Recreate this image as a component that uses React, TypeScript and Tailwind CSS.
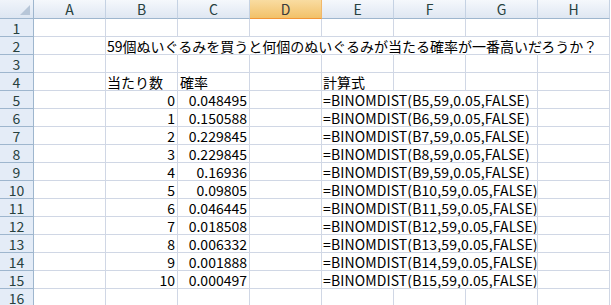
import React from "react";

const cols = ["A", "B", "C", "D", "E", "F", "G", "H"];

type Row = { b?: string; c?: string; e?: string; bLeft?: boolean; cLeft?: boolean; wide?: string };

const probs = ["0.048495", "0.150588", "0.229845", "0.229845", "0.16936", "0.09805", "0.046445", "0.018508", "0.006332", "0.001888", "0.000497"];

const rows: Row[] = [
  {},
  { wide: "59個ぬいぐるみを買うと何個のぬいぐるみが当たる確率が一番高いだろうか？" },
  {},
  { b: "当たり数", c: "確率", e: "計算式", bLeft: true, cLeft: true },
  ...probs.map((p, i) => ({ b: String(i), c: p, e: `=BINOMDIST(B${i + 5},59,0.05,FALSE)` })),
  {},
];

const font = { fontFamily: '"MS PGothic","Noto Sans CJK JP",sans-serif' };

export default function App() {
  return (
    <div className="w-[611px] h-[305px] overflow-hidden bg-white text-black" style={font}>
      <div className="flex h-[19px]">
        <div className="relative w-[34px] h-[19px] shrink-0 border-r border-b border-[#9eb6ce] bg-gradient-to-b from-[#f0f4fa] to-[#dde6f2]">
          <div className="absolute right-[3px] bottom-[3px] w-0 h-0 border-l-[10px] border-l-transparent border-b-[10px] border-b-[#b7c6d8]" />
        </div>
        {cols.map((c) => (
          <div
            key={c}
            className={
              c === "D"
                ? "w-[72px] h-[19px] shrink-0 flex items-center justify-center border-r border-b border-r-[#f1b86a] border-b-[#f29536] bg-gradient-to-b from-[#f9dca1] to-[#f2c168] text-[14px] leading-none text-[#3a3a3a]"
                : "w-[72px] h-[19px] shrink-0 flex items-center justify-center border-r border-b border-r-[#c5d2e3] border-b-[#9eb6ce] bg-gradient-to-b from-[#f5f8fc] to-[#dfe7f2] text-[14px] leading-none text-[#27413e]"
            }
          >
            {c}
          </div>
        ))}
      </div>
      {rows.map((r, i) => (
        <div key={i} className="flex h-[18px]">
          <div className="w-[34px] h-[18px] shrink-0 flex items-center justify-center border-r border-b border-[#9eb6ce] bg-[#e4ecf7] text-[14px] leading-none text-[#27413e]">
            {i + 1}
          </div>
          {cols.map((c) => {
            let content: React.ReactNode = null;
            let align = "justify-end pr-[2px]";
            if (c === "B" && r.wide) {
              content = <span className="whitespace-nowrap">{r.wide}</span>;
              align = "justify-start pl-[1px]";
            } else if (c === "B" && r.b) {
              content = r.b;
              if (r.bLeft) align = "justify-start pl-[1px]";
            } else if (c === "C" && r.c) {
              content = r.c;
              if (r.cLeft) align = "justify-start pl-[2px]";
            } else if (c === "E" && r.e) {
              content = <span className={r.e.startsWith("=") ? "whitespace-nowrap tracking-[0.12px]" : "whitespace-nowrap"}>{r.e}</span>;
              align = "justify-start pl-[1px]";
            }
            const noRight = (r.wide && ["B", "C", "D", "E", "F", "G"].includes(c)) || (r.e && r.e.startsWith("=") && ["E", "F"].includes(c));
            return (
              <div
                key={c}
                className={`relative w-[72px] h-[18px] shrink-0 flex items-center ${align} border-b border-[#d0d7e5] ${noRight ? "border-r border-r-transparent" : "border-r"} text-[14px] leading-none overflow-visible z-10`}
              >
                {content}
              </div>
            );
          })}
        </div>
      ))}
    </div>
  );
}
